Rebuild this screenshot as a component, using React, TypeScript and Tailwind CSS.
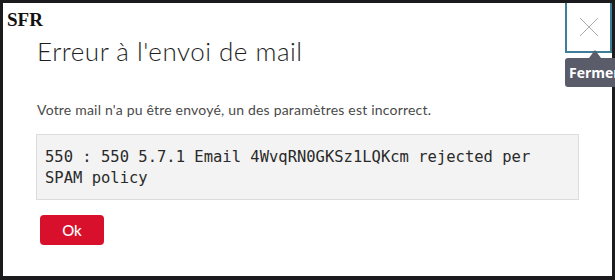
import React from "react";

export default function App() {
  return (
    <div className="relative w-[615px] h-[280px] overflow-hidden bg-[#1b1b1d] pt-[3px] pl-[3px]">
      <div className="relative w-[609px] h-[273px] bg-white flex flex-col">
        <div
          className="pl-[4px] pt-[6px] text-[19px] leading-[22px] font-bold text-[#111]"
          style={{ fontFamily: '"Liberation Serif", serif' }}
        >
          SFR
        </div>
        <div
          className="pl-[34px] mt-[4px] text-[26px] leading-[32px] font-light tracking-[0.5px] text-[#1e1e1e]"
          style={{ fontFamily: 'Lato, "Open Sans", sans-serif' }}
        >
          Erreur à l'envoi de mail
        </div>
        <div
          className="pl-[34px] mt-[33px] text-[14px] leading-[19px] tracking-[0.2px] text-[#4a4a4a]"
          style={{ fontFamily: 'Lato, "Open Sans", sans-serif' }}
        >
          Votre mail n'a pu être envoyé, un des paramètres est incorrect.
        </div>
        <div className="ml-[33px] mt-[15px] w-[543px] border border-[#dcdcdc] bg-[#f3f3f3] pl-[8px] pr-[8px] pt-[12px] pb-[10px]">
          <div
            className="text-[15.5px] leading-[21px] text-[#2a2a2a]"
            style={{ fontFamily: '"DejaVu Sans Mono", "Liberation Mono", monospace' }}
          >
            550 : 550 5.7.1 Email 4WvqRN0GKSz1LQKcm rejected per
            <br />
            SPAM policy
          </div>
        </div>
        <div className="ml-[37px] mt-[15px]">
          <button
            className="w-[64px] h-[30px] rounded-[4px] bg-[#d9102c] text-white text-[15px] font-medium"
            style={{ fontFamily: 'Lato, "Open Sans", sans-serif' }}
          >
            Ok
          </button>
        </div>
      </div>

      <button className="absolute left-[565px] top-0 w-[47px] h-[53px] border-l-2 border-b-2 border-r-2 border-[#3d7f98] bg-white flex items-center justify-center pt-[3px]">
        <svg width="20" height="20" viewBox="0 0 20 20">
          <path d="M1 1 L19 19 M19 1 L1 19" stroke="#adadad" strokeWidth="1" fill="none" />
        </svg>
      </button>
      <div className="absolute left-0 top-0 w-[615px] h-[3px] bg-[#1b1b1d]" />

      <div className="absolute left-[565px] top-[58px] w-[64px] h-[29px] rounded-[3px] bg-[#5a5c6a] flex items-center pl-[4px]">
        <span
          className="text-white text-[14px] font-bold"
          style={{ fontFamily: '"Open Sans", Lato, sans-serif' }}
        >
          Fermer
        </span>
      </div>
      <div className="absolute left-[589px] top-[50px] w-0 h-0 border-l-[6px] border-r-[6px] border-b-[8px] border-l-transparent border-r-transparent border-b-[#5a5c6a]" />
    </div>
  );
}
